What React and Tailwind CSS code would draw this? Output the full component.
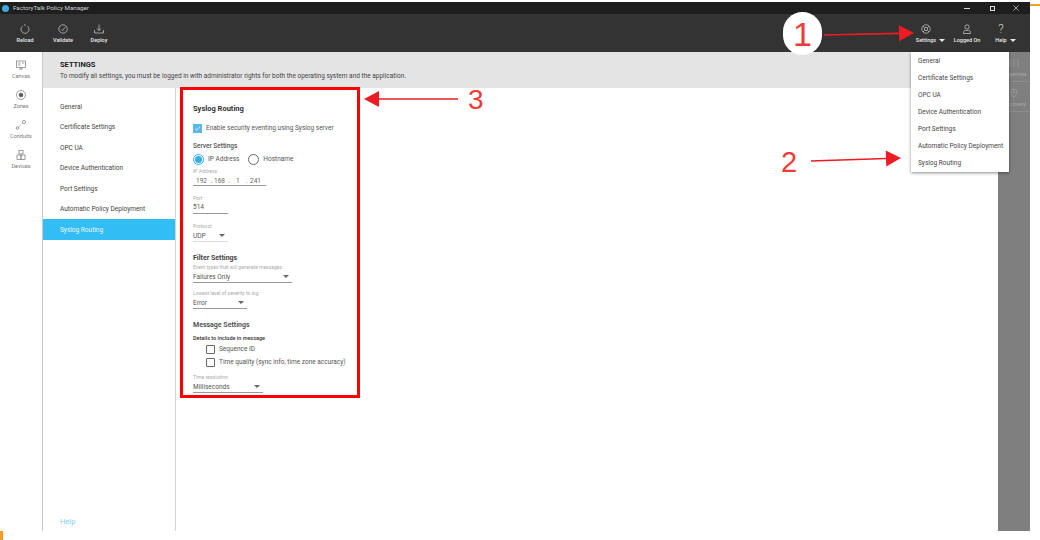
import React from "react";

const font = { fontFamily: "Roboto, sans-serif" };

function ToolBtn({ icon, label, caret, className = "" }) {
  return (
    <div className={"flex flex-col items-center justify-start " + className}>
      <div className="h-[14px] flex items-center justify-center">{icon}</div>
      <div className="relative text-[5.5px] leading-[8px] font-medium text-[#e8e8e8] whitespace-nowrap">
        <span>{label}</span>
        {caret && <span className="absolute left-full top-[3px] ml-[3px] w-0 h-0 border-l-[3px] border-r-[3px] border-t-[3px] border-l-transparent border-r-transparent border-t-[#e8e8e8]" />}
      </div>
    </div>
  );
}

const I = ({ children, s = 12 }) => (
  <svg width={s} height={s} viewBox="0 0 12 12" fill="none" stroke="#d0d0d0" strokeWidth="0.7">{children}</svg>
);
const G = ({ children, s = 12 }) => (
  <svg width={s} height={s} viewBox="0 0 12 12" fill="none" stroke="#777" strokeWidth="0.7">{children}</svg>
);

function SideItem({ icon, label }) {
  return (
    <div className="h-[30px] flex flex-col items-center">
      <div className="h-[14px] flex items-center justify-center">{icon}</div>
      <div className="text-[5.5px] leading-[8px] text-[#777]">{label}</div>
    </div>
  );
}

function Select({ width, label, value, mt, line = "border-[#999]" }) {
  return (
    <div className={mt} style={{ width }}>
      <div className="text-[5px] leading-[6px] text-[#aaa] whitespace-nowrap">{label}</div>
      <div className={"h-[10px] flex items-center justify-between border-b pr-[2px] mt-[1px] box-content pb-[1px] " + line}>
        <span className="text-[6.5px] leading-[9px] text-[#555] mt-[2px]">{value}</span>
        <span className="w-0 h-0 border-l-[3px] border-r-[3px] border-t-[3px] border-l-transparent border-r-transparent border-t-[#666] mr-[1px]" />
      </div>
    </div>
  );
}

function Check({ label }) {
  return (
    <div className="flex items-center gap-[4px] h-[13px] pl-[13px]">
      <span className="w-[9px] h-[9px] border border-[#666] rounded-[1px]" />
      <span className="text-[6.5px] leading-[9px] text-[#555] whitespace-nowrap">{label}</span>
    </div>
  );
}

const navItems = ["General", "Certificate Settings", "OPC UA", "Device Authentication", "Port Settings", "Automatic Policy Deployment", "Syslog Routing"];

const Arrow = ({ x1, y1, x2, y2 }) => {
  const l = Math.hypot(x2 - x1, y2 - y1);
  const ux = (x2 - x1) / l, uy = (y2 - y1) / l;
  const h = 15, w = 8;
  const bx = x2 - ux * h, by = y2 - uy * h;
  return (
    <>
      <line x1={x1} y1={y1} x2={bx} y2={by} stroke="#ed1c24" strokeWidth="1.6" />
      <polygon points={`${x2},${y2} ${bx - uy * w},${by + ux * w} ${bx + uy * w},${by - ux * w}`} fill="#ed1c24" />
    </>
  );
};

export default function App() {
  return (
    <div className="relative w-[1040px] h-[540px] bg-white overflow-hidden" style={font}>
      <div className="w-[1030px] h-[529px] mt-[2px] flex flex-col">
        {/* title bar */}
        <div className="h-[12px] bg-[#1e1e1e] flex items-center justify-between pl-[2px] pr-[11px]">
          <div className="flex items-center gap-[4px]">
            <span className="w-[7px] h-[7px] rounded-full bg-[#3ba7dc]" />
            <span className="text-[6.2px] leading-[8px] text-[#cfcfcf]">FactoryTalk Policy Manager</span>
          </div>
          <div className="flex items-center">
            <span className="w-[6px] h-px bg-[#ddd]" />
            <span className="w-[5px] h-[5px] border border-[#ddd] ml-[20px]" />
            <svg className="ml-[18px]" width="6" height="6" viewBox="0 0 6 6" stroke="#ddd" strokeWidth="0.7"><path d="M0.5 .5l5 5M5.5 .5l-5 5" /></svg>
          </div>
        </div>
        {/* toolbar */}
        <div className="h-[38px] bg-[#333333] flex justify-between pt-[8px]">
          <div className="flex pl-[17px]">
            <ToolBtn className="w-[16px]" label="Reload" icon={<I><path d="M8.5 3.2a4 4 0 1 1-5 0M6 1v2" /></I>} />
            <ToolBtn className="w-[24px] ml-[18px]" label="Validate" icon={<I><circle cx="6" cy="6" r="4.2" /><path d="M4.3 6.5l1.2 1.2L8 4.2" /></I>} />
            <ToolBtn className="w-[18px] ml-[15px]" label="Deploy" icon={<I><path d="M1.5 7v3h9V7M6 1.5v6M4 5.5l2 2 2-2" /></I>} />
          </div>
          <div className="flex mr-[15px]">
            <ToolBtn className="w-[28px]" label="Settings" caret icon={<I><circle cx="6" cy="6" r="4.2" /><circle cx="6" cy="6" r="1.7" /><path d="M3 3l1.5 1.5M9 3L7.5 4.5M3 9l1.5-1.5M9 9L7.5 7.5" /></I>} />
            <ToolBtn className="w-[28px] ml-[13px]" label="Logged On" icon={<I><circle cx="6" cy="4" r="2.2" /><path d="M2.5 10.5V9.2c0-1 1-1.8 2-1.8h3c1 0 2 .8 2 1.8v1.3z" /></I>} />
            <ToolBtn className="w-[28px] ml-[6px]" label="Help" caret icon={<span className="text-[12px] leading-[14px] text-[#d0d0d0] font-light">?</span>} />
          </div>
        </div>
        {/* body */}
        <div className="flex-1 flex min-h-0">
          <div className="w-[43px] border-r border-[#c8c8c8] pt-[6px] flex flex-col">
            <SideItem label="Canvas" icon={<G><rect x="1.5" y="2" width="9" height="6.5" /><path d="M3 4h2.5M3 6h2.5M7 4h2M6 8.5V10M4 10h4" /></G>} />
            <SideItem label="Zones" icon={<G><circle cx="6" cy="6" r="4.5" /><circle cx="6" cy="6" r="2" fill="#555" /></G>} />
            <SideItem label="Conduits" icon={<G><circle cx="2.5" cy="9" r="1.3" /><circle cx="9" cy="3" r="1.6" /><path d="M3.8 8L7.8 4" strokeDasharray="1 1" /></G>} />
            <SideItem label="Devices" icon={<G><rect x="4" y="1.5" width="4" height="3.5" /><rect x="2" y="6" width="4" height="4.5" /><rect x="6" y="6" width="4" height="4.5" /></G>} />
          </div>
          <div className="flex-1 flex flex-col min-w-0">
            <div className="h-[36px] bg-[#e4e4e4] pl-[17px] pt-[8px]">
              <div className="text-[7.5px] leading-[10px] font-bold text-[#222]">SETTINGS</div>
              <div className="text-[6.5px] leading-[11px] text-[#444] mt-[1px]">To modify all settings, you must be logged in with administrator rights for both the operating system and the application.</div>
            </div>
            <div className="flex-1 flex min-h-0">
              <div className="w-[133px] border-r border-[#d4d4d4] pt-[8px] flex flex-col">
                {navItems.map((n, i) => (
                  <div key={n} className={"pl-[17px] pt-[2px] flex items-center text-[6.5px] leading-[9px] whitespace-nowrap " + (i === 6 ? "h-[21px] bg-[#33bdf5] text-[#eaf8ff]" : "h-[20.5px] text-[#444]")}>{n}</div>
                ))}
                <div className="mt-auto pl-[17px] pb-[5px] text-[7.5px] leading-[9px] text-[#7fd0f2]">Help</div>
              </div>
              <div className="pl-[17px] pt-[16px] flex flex-col items-start">
                <div className="text-[7.5px] leading-[10px] font-bold text-[#333] whitespace-nowrap">Syslog Routing</div>
                <div className="flex items-center gap-[4px] mt-[10px] h-[9px]">
                  <span className="w-[9px] h-[9px] bg-[#5cb8e6] flex items-center justify-center">
                    <svg width="7" height="7" viewBox="0 0 7 7" fill="none" stroke="#fff" strokeWidth="0.8"><path d="M1 3.7l1.6 1.5L6 1.8" /></svg>
                  </span>
                  <span className="text-[6.5px] leading-[9px] text-[#555] whitespace-nowrap">Enable security eventing using Syslog server</span>
                </div>
                <div className="text-[6.5px] leading-[9px] font-medium text-[#555] mt-[9px] whitespace-nowrap">Server Settings</div>
                <div className="flex items-center mt-[3px] h-[11px] text-[6.5px] leading-[9px] text-[#555]">
                  <span className="w-[11px] h-[11px] rounded-full border border-[#33aee8] flex items-center justify-center"><span className="w-[7px] h-[7px] rounded-full bg-[#33aee8]" /></span>
                  <span className="ml-[4px]">IP Address</span>
                  <span className="w-[11px] h-[11px] rounded-full border border-[#666] ml-[9px]" />
                  <span className="ml-[4px]">Hostname</span>
                </div>
                <div className="text-[5px] leading-[6px] text-[#aaa] mt-[3px]">IP Address</div>
                <div className="w-[73px] h-[12px] border-b border-[#999] pt-[3px] flex items-center text-[6.5px] leading-[8px] text-[#666] pl-[3px]">
                  <span className="w-[15px]">192</span><span className="w-[3px]">.</span>
                  <span className="w-[14px]">168</span><span className="w-[8px]">.</span>
                  <span className="w-[10px]">1</span><span className="w-[4px]">.</span>
                  <span>241</span>
                </div>
                <div className="text-[5px] leading-[6px] text-[#aaa] mt-[9px]">Port</div>
                <div className="w-[35px] h-[13px] border-b border-[#999] pt-[1px] flex items-center text-[6.5px] leading-[9px] text-[#555]">514</div>
                <Select width="35px" label="Protocol" value="UDP" mt="mt-[9px]" line="border-[#ddd]" />
                <div className="text-[7px] leading-[9px] font-bold text-[#444] mt-[12px] whitespace-nowrap">Filter Settings</div>
                <Select width="99px" label="Event types that will generate messages" value="Failures Only" mt="mt-[1px]" />
                <Select width="54px" label="Lowest level of severity to log" value="Error" mt="mt-[7px]" />
                <div className="text-[7px] leading-[9px] font-bold text-[#555] mt-[12px] whitespace-nowrap">Message Settings</div>
                <div className="text-[5.5px] leading-[8px] font-medium text-[#333] mt-[4px] whitespace-nowrap">Details to include in message</div>
                <div className="mt-[1px] flex flex-col">
                  <Check label="Sequence ID" />
                  <Check label="Time quality (sync info, time zone accuracy)" />
                </div>
                <Select width="70px" label="Time resolution" value="Milliseconds" mt="mt-[5px]" />
              </div>
            </div>
          </div>
          {/* right rail */}
          <div className="w-[32px] bg-[#7f7f7f] flex flex-col">
            <div className="h-[30px] border-b border-[#8c8c8c] flex flex-col items-center justify-end pb-[3px] text-[5.5px] leading-[7px] text-[#a6a6a6]">
              <svg width="12" height="10" viewBox="0 0 12 10" stroke="#a0a0a0" strokeWidth="0.7"><path d="M2 1v8M6 1v8M10 1v8" /></svg>
              <span className="mt-[3px]">Properties</span>
            </div>
            <div className="h-[30px] border-b border-[#8c8c8c] flex flex-col items-center justify-end pb-[3px] text-[5.5px] leading-[7px] text-[#a6a6a6]">
              <svg width="12" height="10" viewBox="0 0 12 10" fill="none" stroke="#a0a0a0" strokeWidth="0.7"><path d="M6 9.5C4 7 3 5.5 3 4a3 3 0 0 1 6 0c0 1.5-1 3-3 5.5z" /><circle cx="6" cy="4" r="1" /></svg>
              <span className="mt-[3px]">Discovery</span>
            </div>
          </div>
        </div>
      </div>

      {/* settings menu */}
      <div className="absolute left-[911px] top-[52px] w-[98px] h-[120px] bg-white shadow-[0_1px_3px_rgba(0,0,0,0.45)] pl-[7px]">
        {navItems.map((n) => (
          <div key={n} className="h-[17.15px] flex items-center text-[6.5px] leading-[8px] text-[#444] whitespace-nowrap">{n}</div>
        ))}
      </div>

      {/* red box */}
      <div className="absolute left-[180px] top-[87px] w-[180px] h-[311px] border-[3px] border-[#ff0000] pointer-events-none" />

      {/* callouts */}
      <svg className="absolute left-0 top-0 pointer-events-none" width="1040" height="540">
        <Arrow x1={824} y1={35} x2={914} y2={33} />
        <Arrow x1={811} y1={161} x2={901} y2={158} />
        <Arrow x1={458} y1={99} x2={364} y2={99} />
      </svg>
      <div className="absolute left-[783px] top-[12px] w-[39px] h-[43px] rounded-full bg-white flex items-center justify-center text-[34px] leading-[40px] text-[#ed3b3b]" style={{ fontFamily: "'Liberation Sans', sans-serif" }}>1</div>
      <div className="absolute left-[781px] top-[147px] text-[29px] leading-[30px] text-[#ed3b3b]" style={{ fontFamily: "'Liberation Sans', sans-serif" }}>2</div>
      <div className="absolute left-[468px] top-[85px] text-[28px] leading-[30px] text-[#ed3b3b]" style={{ fontFamily: "'Liberation Sans', sans-serif" }}>3</div>

      {/* crop artefacts */}
      <div className="absolute left-[1030px] top-[4px] w-[10px] h-[2px] bg-[#f0a020]" />
      <div className="absolute left-0 top-[531px] w-[3px] h-[9px] bg-[#f59a23]" />
    </div>
  );
}
